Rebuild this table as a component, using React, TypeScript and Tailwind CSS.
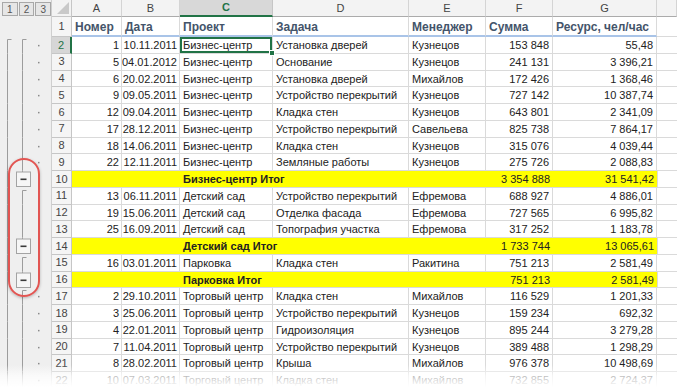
import React from 'react';

type Detail = { n: number; kind: 'detail'; a: string; b: string; c: string; d: string; e: string; f: string; g: string; start?: boolean; first?: boolean };
type Total = { n: number; kind: 'total'; label: string; f: string; g: string };
type Row = Detail | Total;

const rows: Row[] = [
  { n: 2, kind: 'detail', a: '1', b: '10.11.2011', c: 'Бизнес-центр', d: 'Установка дверей', e: 'Кузнецов', f: '153 848', g: '55,48', start: true, first: true },
  { n: 3, kind: 'detail', a: '5', b: '04.01.2012', c: 'Бизнес-центр', d: 'Основание', e: 'Кузнецов', f: '241 131', g: '3 396,21' },
  { n: 4, kind: 'detail', a: '6', b: '20.02.2011', c: 'Бизнес-центр', d: 'Установка дверей', e: 'Михайлов', f: '172 426', g: '1 368,46' },
  { n: 5, kind: 'detail', a: '9', b: '09.05.2011', c: 'Бизнес-центр', d: 'Устройство перекрытий', e: 'Кузнецов', f: '727 142', g: '10 387,74' },
  { n: 6, kind: 'detail', a: '12', b: '09.04.2011', c: 'Бизнес-центр', d: 'Кладка стен', e: 'Кузнецов', f: '643 801', g: '2 341,09' },
  { n: 7, kind: 'detail', a: '17', b: '28.12.2011', c: 'Бизнес-центр', d: 'Устройство перекрытий', e: 'Савельева', f: '825 738', g: '7 864,17' },
  { n: 8, kind: 'detail', a: '18', b: '14.06.2011', c: 'Бизнес-центр', d: 'Кладка стен', e: 'Кузнецов', f: '315 076', g: '4 039,44' },
  { n: 9, kind: 'detail', a: '22', b: '12.11.2011', c: 'Бизнес-центр', d: 'Земляные работы', e: 'Кузнецов', f: '275 726', g: '2 088,83' },
  { n: 10, kind: 'total', label: 'Бизнес-центр Итог', f: '3 354 888', g: '31 541,42' },
  { n: 11, kind: 'detail', a: '13', b: '06.11.2011', c: 'Детский сад', d: 'Устройство перекрытий', e: 'Ефремова', f: '688 927', g: '4 886,01', start: true },
  { n: 12, kind: 'detail', a: '19', b: '15.06.2011', c: 'Детский сад', d: 'Отделка фасада', e: 'Ефремова', f: '727 565', g: '6 995,82' },
  { n: 13, kind: 'detail', a: '25', b: '16.09.2011', c: 'Детский сад', d: 'Топография участка', e: 'Ефремова', f: '317 252', g: '1 183,78' },
  { n: 14, kind: 'total', label: 'Детский сад Итог', f: '1 733 744', g: '13 065,61' },
  { n: 15, kind: 'detail', a: '16', b: '03.01.2011', c: 'Парковка', d: 'Кладка стен', e: 'Ракитина', f: '751 213', g: '2 581,49', start: true },
  { n: 16, kind: 'total', label: 'Парковка Итог', f: '751 213', g: '2 581,49' },
  { n: 17, kind: 'detail', a: '2', b: '29.10.2011', c: 'Торговый центр', d: 'Кладка стен', e: 'Михайлов', f: '116 529', g: '1 201,33', start: true },
  { n: 18, kind: 'detail', a: '3', b: '25.06.2011', c: 'Торговый центр', d: 'Устройство перекрытий', e: 'Кузнецов', f: '159 234', g: '692,32' },
  { n: 19, kind: 'detail', a: '4', b: '22.01.2011', c: 'Торговый центр', d: 'Гидроизоляция', e: 'Кузнецов', f: '895 244', g: '3 279,28' },
  { n: 20, kind: 'detail', a: '7', b: '11.04.2011', c: 'Торговый центр', d: 'Устройство перекрытий', e: 'Кузнецов', f: '389 488', g: '1 298,29' },
  { n: 21, kind: 'detail', a: '8', b: '28.02.2011', c: 'Торговый центр', d: 'Крыша', e: 'Михайлов', f: '976 378', g: '10 498,69' },
  { n: 22, kind: 'detail', a: '10', b: '07.03.2011', c: 'Торговый центр', d: 'Кладка стен', e: 'Михайлов', f: '732 855', g: '2 724,37' },
];

const H = 16.75;
const LINE = '#9c9c9c';

function Gutter({ row }: { row: Row }) {
  const isDetail = row.kind === 'detail';
  const d = row as Detail;
  return (
    <div className="w-[52px] shrink-0 bg-[#efefef] border-r border-[#cfcfcf]">
      <svg width="51" height={H} viewBox={`0 0 51 ${H}`} className="block overflow-visible">
        <line x1="7.5" y1={isDetail && d.first ? 2.5 : 0} x2="7.5" y2={H} stroke={LINE} strokeWidth="1" />
        {isDetail && d.first && <line x1="7.5" y1="2.5" x2="11.5" y2="2.5" stroke={LINE} strokeWidth="1" />}
        {isDetail ? (
          <>
            <line x1="22.5" y1={d.start ? 2.5 : 0} x2="22.5" y2={H} stroke={LINE} strokeWidth="1" />
            {d.start && <line x1="22.5" y1="2.5" x2="26.5" y2="2.5" stroke={LINE} strokeWidth="1" />}
            <rect x="38" y={H / 2 - 0.5} width="1.5" height="1.5" fill="#8a8a8a" />
          </>
        ) : (
          <>
            <line x1="22.5" y1="0" x2="22.5" y2="1.5" stroke={LINE} strokeWidth="1" />
            <rect x="16.5" y="1" width="14" height="14.5" fill="#f6f6f6" stroke="#a3a3a3" strokeWidth="1" />
            <rect x="20.5" y="7.5" width="6" height="1.6" fill="#3a3a3a" />
          </>
        )}
      </svg>
    </div>
  );
}

function RowHeader({ n, selected }: { n: number; selected?: boolean }) {
  return selected ? (
    <div className="w-[20px] shrink-0 bg-[#d6d6d6] border-r-2 border-r-[#217346] border-b border-b-[#c6c6c6] text-[11px] text-[#217346] flex items-center justify-center">
      {n}
    </div>
  ) : (
    <div className="w-[20px] shrink-0 bg-[#f5f5f5] border-r border-b border-[#c6c6c6] text-[11px] text-[#444] flex items-center justify-center">
      {n}
    </div>
  );
}

const cellBase = 'shrink-0 border-r border-b border-[#dadada] flex items-center pt-[1px] px-[3px] whitespace-nowrap overflow-hidden text-[11px] text-[#222]';

function DetailRow({ r }: { r: Detail }) {
  return (
    <div className="flex h-[16.75px]">
      <Gutter row={r} />
      <RowHeader n={r.n} selected={r.n === 2} />
      <div className={`${cellBase} w-[50px] justify-end pr-[2px]`}>{r.a}</div>
      <div className={`${cellBase} w-[58px] justify-end pr-[2px]`}>{r.b}</div>
      {r.n === 2 ? (
        <div className={`${cellBase} w-[93px] relative overflow-visible shadow-[inset_0_0_0_2px_#217346]`}>
          {r.c}
          <span className="absolute right-[-3px] bottom-[-3px] w-[6px] h-[6px] bg-[#217346] border border-white z-10" />
        </div>
      ) : (
        <div className={`${cellBase} w-[93px]`}>{r.c}</div>
      )}
      <div className={`${cellBase} w-[136px]`}>{r.d}</div>
      <div className={`${cellBase} w-[77px]`}>{r.e}</div>
      <div className={`${cellBase} w-[67px] justify-end`}>{r.f}</div>
      <div className={`${cellBase} w-[104px] justify-end`}>{r.g}</div>
      <div className="flex-1 border-b border-[#dadada]" />
    </div>
  );
}

const totalBase = 'shrink-0 h-full bg-[#ffff00] border-b border-[#dadada] flex items-center pt-[1px] px-[3px] whitespace-nowrap text-[11px] text-[#222]';

function TotalRow({ r }: { r: Total }) {
  return (
    <div className="flex h-[16.75px]">
      <Gutter row={r} />
      <RowHeader n={r.n} />
      <div className={`${totalBase} w-[108px]`} />
      <div className={`${totalBase} w-[229px] font-bold`}>{r.label}</div>
      <div className={`${totalBase} w-[77px]`} />
      <div className={`${totalBase} w-[67px] justify-end`}>{r.f}</div>
      <div className={`${totalBase} w-[104px] justify-end`}>{r.g}</div>
      <div className="flex-1 border-b border-l border-[#dadada]" />
    </div>
  );
}

const colHead = 'shrink-0 h-full bg-[#f3f3f3] border-r border-r-[#d4d4d4] border-b border-b-[#ababab] flex items-center justify-center text-[11px] text-[#444]';
const headCell = 'shrink-0 border-r border-r-[#dadada] border-b-2 border-b-[#a9c4e8] flex items-center px-[3px] pt-[2px] whitespace-nowrap text-[12px] font-bold text-[#44546a]';

export default function App() {
  return (
    <div className="relative w-[677px] h-[387px] overflow-hidden bg-white font-['Liberation_Sans',Arial,sans-serif]">
      {/* column letters */}
      <div className="flex h-[17px]">
        <div className="w-[52px] shrink-0 bg-[#efefef] border-r border-[#cfcfcf] flex gap-[1px] pl-[2px] pt-[2px]">
          {['1', '2', '3'].map((t) => (
            <div key={t} className="w-[16px] h-[14px] border border-[#a8a8a8] bg-[#e6e6e6] text-[10px] text-[#555] flex items-center justify-center">
              {t}
            </div>
          ))}
        </div>
        <div className="w-[20px] shrink-0 bg-[#f3f3f3] border-r border-b border-[#c6c6c6] flex items-end justify-end p-[2px]">
          <svg width="12" height="12" viewBox="0 0 12 12">
            <polygon points="12,0 12,12 0,12" fill="#c9c9c9" />
          </svg>
        </div>
        <div className={`${colHead} w-[50px]`}>A</div>
        <div className={`${colHead} w-[58px]`}>B</div>
        <div className="shrink-0 h-full w-[93px] bg-[#d8d8d8] border-r border-r-[#c6c6c6] border-b-2 border-b-[#217346] flex items-center justify-center text-[11px] font-bold text-[#217346]">C</div>
        <div className={`${colHead} w-[136px]`}>D</div>
        <div className={`${colHead} w-[77px]`}>E</div>
        <div className={`${colHead} w-[67px]`}>F</div>
        <div className={`${colHead} w-[104px]`}>G</div>
        <div className={`${colHead} flex-1`} />
      </div>

      {/* header row 1 */}
      <div className="flex h-[20px]">
        <div className="w-[52px] shrink-0 bg-[#efefef] border-r border-[#cfcfcf]" />
        <div className="w-[20px] shrink-0 bg-[#f5f5f5] border-r border-b border-[#c6c6c6] text-[11px] text-[#444] flex items-center justify-center">1</div>
        <div className={`${headCell} w-[50px]`}>Номер</div>
        <div className={`${headCell} w-[58px]`}>Дата</div>
        <div className={`${headCell} w-[93px]`}>Проект</div>
        <div className={`${headCell} w-[136px]`}>Задача</div>
        <div className={`${headCell} w-[77px]`}>Менеджер</div>
        <div className={`${headCell} w-[67px]`}>Сумма</div>
        <div className={`${headCell} w-[104px]`}>Ресурс, чел/час</div>
        <div className="flex-1 border-b border-[#dadada]" />
      </div>

      {rows.map((r) => (r.kind === 'detail' ? <DetailRow key={r.n} r={r} /> : <TotalRow key={r.n} r={r} />))}

      {/* annotation around outline buttons */}
      <div className="absolute left-[8px] top-[158px] w-[32px] h-[139px] rounded-[16px] border-2 border-[#e25552] shadow-[0_1px_3px_rgba(0,0,0,0.25)]" />

      {/* bottom fade */}
      <div className="absolute left-0 right-0 bottom-0 h-[22px] bg-linear-to-b from-white/0 via-white/70 to-white" />
    </div>
  );
}
